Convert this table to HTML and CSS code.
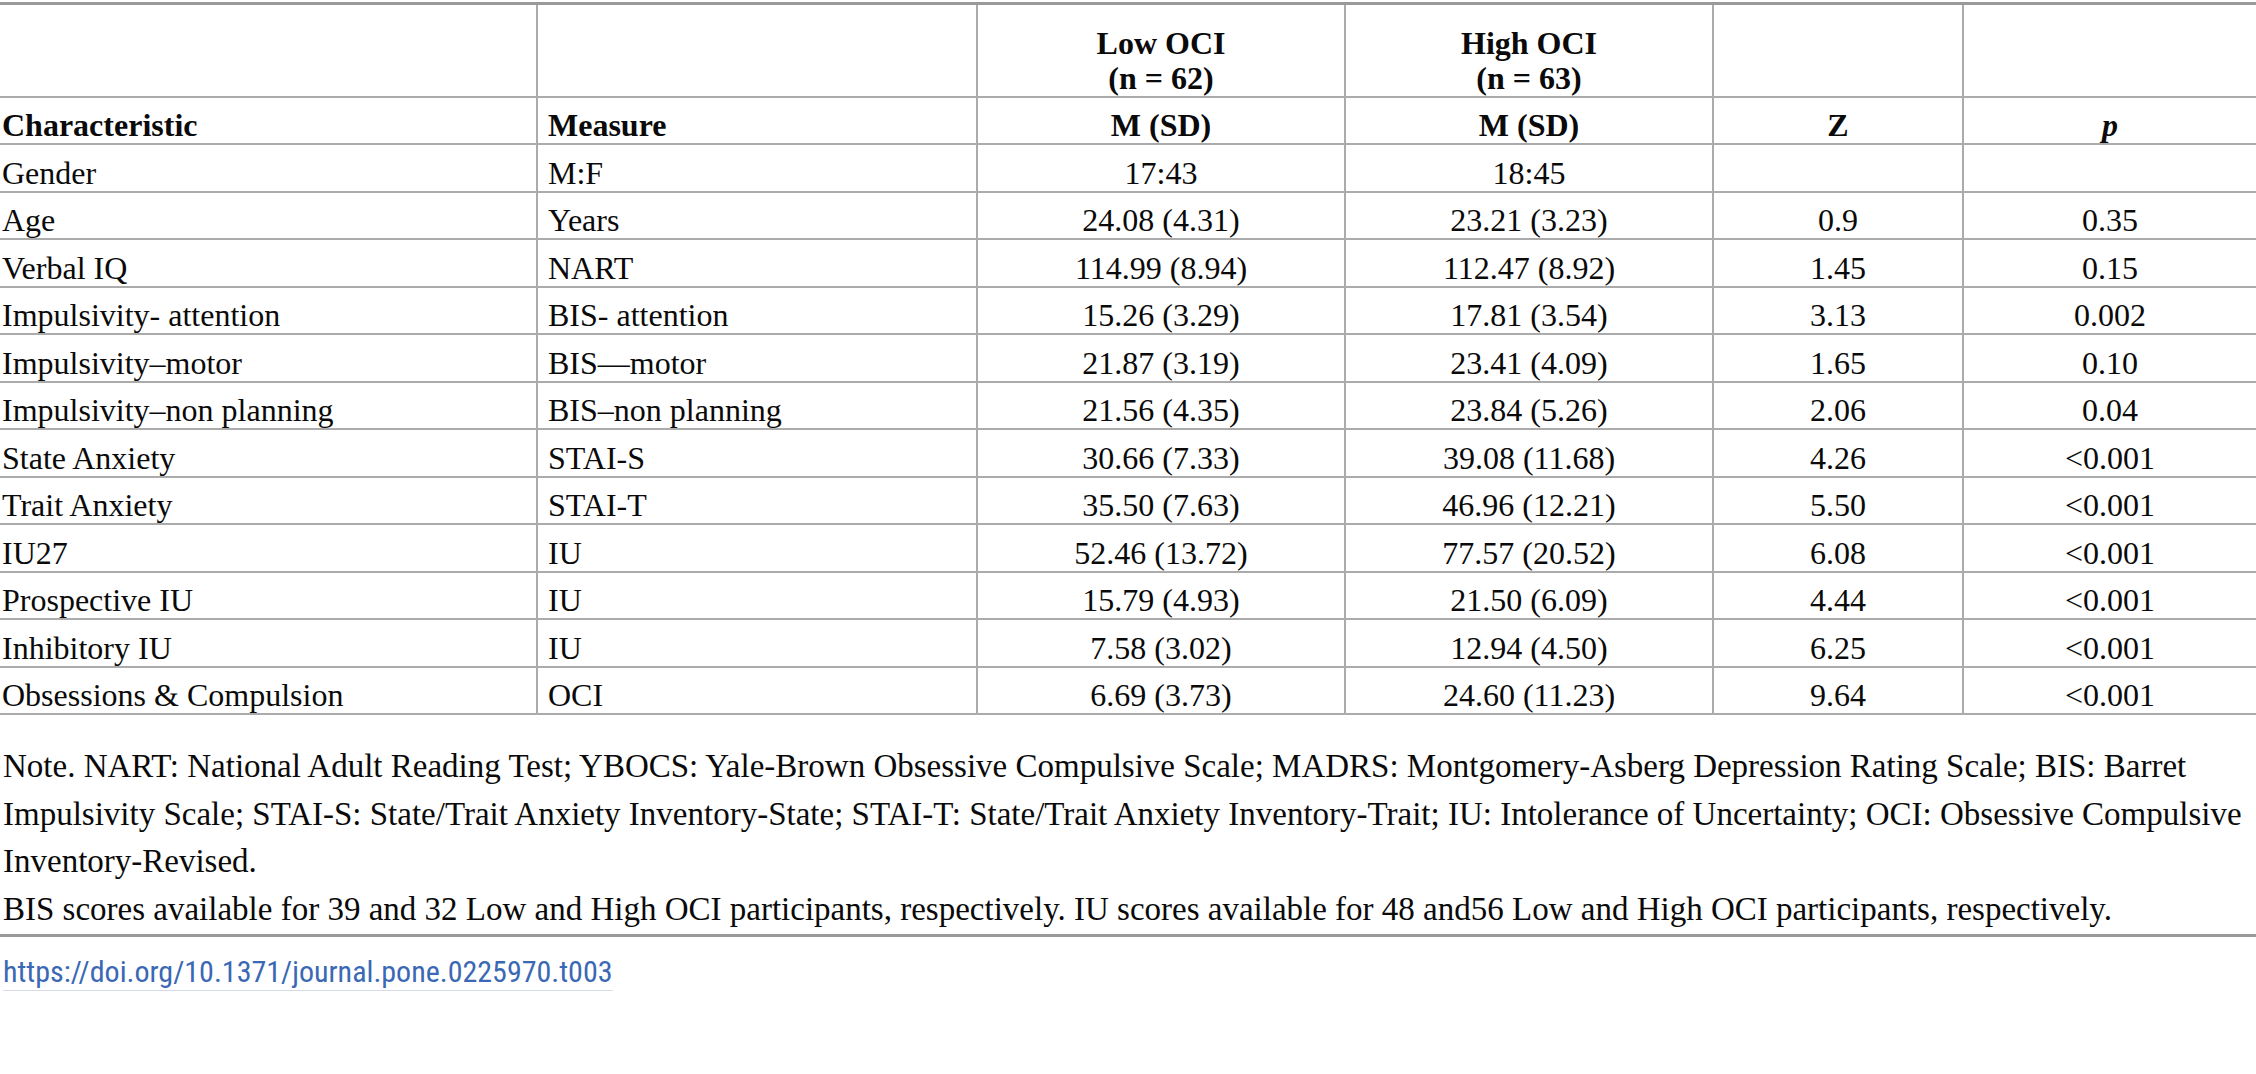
FILE: index.html
```html
<!DOCTYPE html>
<html lang="en">
<head>
<meta charset="utf-8">
<title>Table 3</title>
<link rel="stylesheet" href="styles.css">
</head>
<body>
<div class="page">
  <table class="data">
    <colgroup>
      <col class="c1"><col class="c2"><col class="c3"><col class="c4"><col class="c5"><col class="c6">
    </colgroup>
    <thead>
      <tr class="group">
        <th class="first"></th>
        <th></th>
        <th class="ctr">Low OCI<br>(n = 62)</th>
        <th class="ctr">High OCI<br>(n = 63)</th>
        <th></th>
        <th></th>
      </tr>
      <tr class="labels">
        <th class="first left">Characteristic</th>
        <th class="left">Measure</th>
        <th class="ctr">M (SD)</th>
        <th class="ctr">M (SD)</th>
        <th class="ctr">Z</th>
        <th class="ctr"><em>p</em></th>
      </tr>
    </thead>
    <tbody>
      <tr><td class="first">Gender</td><td>M:F</td><td class="ctr">17:43</td><td class="ctr">18:45</td><td class="ctr"></td><td class="ctr"></td></tr>
      <tr><td class="first">Age</td><td>Years</td><td class="ctr">24.08 (4.31)</td><td class="ctr">23.21 (3.23)</td><td class="ctr">0.9</td><td class="ctr">0.35</td></tr>
      <tr><td class="first">Verbal IQ</td><td>NART</td><td class="ctr">114.99 (8.94)</td><td class="ctr">112.47 (8.92)</td><td class="ctr">1.45</td><td class="ctr">0.15</td></tr>
      <tr><td class="first">Impulsivity- attention</td><td>BIS- attention</td><td class="ctr">15.26 (3.29)</td><td class="ctr">17.81 (3.54)</td><td class="ctr">3.13</td><td class="ctr">0.002</td></tr>
      <tr><td class="first">Impulsivity–motor</td><td>BIS—motor</td><td class="ctr">21.87 (3.19)</td><td class="ctr">23.41 (4.09)</td><td class="ctr">1.65</td><td class="ctr">0.10</td></tr>
      <tr><td class="first">Impulsivity–non planning</td><td>BIS–non planning</td><td class="ctr">21.56 (4.35)</td><td class="ctr">23.84 (5.26)</td><td class="ctr">2.06</td><td class="ctr">0.04</td></tr>
      <tr><td class="first">State Anxiety</td><td>STAI-S</td><td class="ctr">30.66 (7.33)</td><td class="ctr">39.08 (11.68)</td><td class="ctr">4.26</td><td class="ctr">&lt;0.001</td></tr>
      <tr><td class="first">Trait Anxiety</td><td>STAI-T</td><td class="ctr">35.50 (7.63)</td><td class="ctr">46.96 (12.21)</td><td class="ctr">5.50</td><td class="ctr">&lt;0.001</td></tr>
      <tr><td class="first">IU27</td><td>IU</td><td class="ctr">52.46 (13.72)</td><td class="ctr">77.57 (20.52)</td><td class="ctr">6.08</td><td class="ctr">&lt;0.001</td></tr>
      <tr><td class="first">Prospective IU</td><td>IU</td><td class="ctr">15.79 (4.93)</td><td class="ctr">21.50 (6.09)</td><td class="ctr">4.44</td><td class="ctr">&lt;0.001</td></tr>
      <tr><td class="first">Inhibitory IU</td><td>IU</td><td class="ctr">7.58 (3.02)</td><td class="ctr">12.94 (4.50)</td><td class="ctr">6.25</td><td class="ctr">&lt;0.001</td></tr>
      <tr><td class="first">Obsessions &amp; Compulsion</td><td>OCI</td><td class="ctr">6.69 (3.73)</td><td class="ctr">24.60 (11.23)</td><td class="ctr">9.64</td><td class="ctr">&lt;0.001</td></tr>
    </tbody>
  </table>

  <div class="notes">
    <p>Note. NART: National Adult Reading Test; YBOCS: Yale-Brown Obsessive Compulsive Scale; MADRS: Montgomery-Asberg Depression Rating Scale; BIS: Barret Impulsivity Scale; STAI-S: State/Trait Anxiety Inventory-State; STAI-T: State/Trait Anxiety Inventory-Trait; IU: Intolerance of Uncertainty; OCI: Obsessive Compulsive Inventory-Revised.</p>
    <p>BIS scores available for 39 and 32 Low and High OCI participants, respectively. IU scores available for 48 and56 Low and High OCI participants, respectively.</p>
  </div>

  <div class="doi">
    <a href="#">https://doi.org/10.1371/journal.pone.0225970.t003</a>
  </div>
</div>
</body>
</html>
```

FILE: styles.css
```css
html, body {
  margin: 0;
  padding: 0;
  background: #ffffff;
}

.page {
  width: 2256px;
  font-family: "Liberation Serif", "Times New Roman", serif;
  font-size: 32px;
  color: #0a0a0a;
}

.data {
  width: 2256px;
  border-collapse: collapse;
  table-layout: fixed;
  border-top: 3px solid #9a9a9a;
  margin-top: 2px;
}

.c1 { width: 537px; }
.c2 { width: 440px; }
.c3 { width: 368px; }
.c4 { width: 368px; }
.c5 { width: 250px; }
.c6 { width: 293px; }

.data th,
.data td {
  border-bottom: 2px solid #ababab;
  border-left: 2px solid #ababab;
  padding: 10px 10px 0 10px;
  text-align: left;
  vertical-align: middle;
  font-weight: normal;
  line-height: 30px;
  white-space: nowrap;
}

.data th {
  font-weight: bold;
}

.data .first {
  border-left: none;
  padding-left: 2px;
}

.data .ctr {
  text-align: center;
}

.data tr.group th {
  height: 93px;
  vertical-align: bottom;
  padding-top: 0;
  padding-bottom: 0;
  line-height: 35px;
  box-sizing: border-box;
}

.data tr.labels th,
.data tbody td {
  height: 47.5px;
  box-sizing: border-box;
}

.data th em {
  font-style: italic;
}

.notes {
  margin-top: 28px;
}

.notes p {
  margin: 0;
  padding-left: 3px;
  font-size: 33px;
  line-height: 47.5px;
}

.doi {
  margin-top: 1px;
  border-top: 3px solid #9a9a9a;
  padding-top: 16px;
  padding-left: 3px;
}

.doi a {
  font-family: "Liberation Sans Narrow", "Roboto Condensed", "Liberation Sans", sans-serif;
  font-size: 30px;
  color: #3a68b4;
  text-decoration: none;
  border-bottom: 1px solid #d5dbe8;
  line-height: 36px;
  display: inline-block;
}
```
